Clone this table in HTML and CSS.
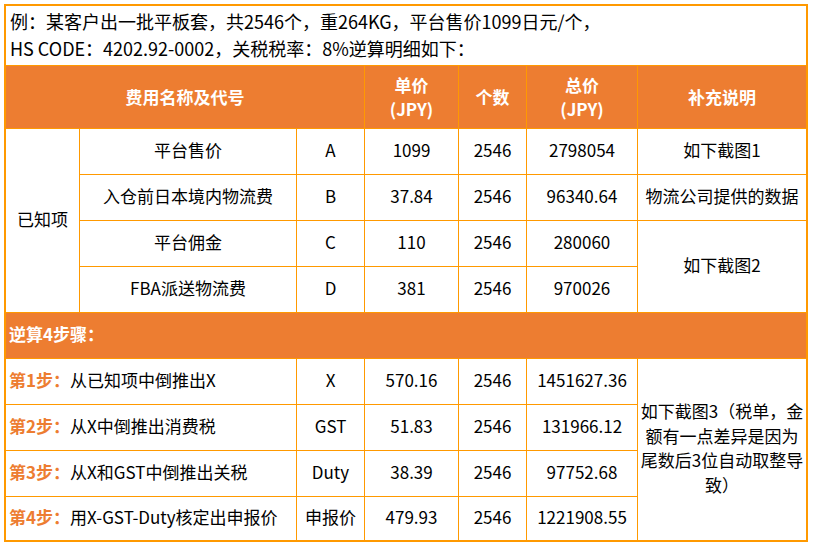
FILE: index.html
```html
<!DOCTYPE html>
<html lang="zh-CN">
<head>
<meta charset="utf-8">
<title>逆算明细</title>
<link rel="stylesheet" href="styles.css">
</head>
<body>
<div class="sheet">
  <div class="cell intro span-all">例：某客户出一批平板套，共2546个，重264KG，平台售价1099日元/个，<br>HS CODE：4202.92-0002，关税税率：8%逆算明细如下：</div>

  <div class="cell head span-name">费用名称及代号</div>
  <div class="cell head">单价<br>(JPY)</div>
  <div class="cell head">个数</div>
  <div class="cell head">总价<br>(JPY)</div>
  <div class="cell head">补充说明</div>

  <div class="cell known">已知项</div>
  <div class="cell">平台售价</div>
  <div class="cell">A</div>
  <div class="cell">1099</div>
  <div class="cell">2546</div>
  <div class="cell">2798054</div>
  <div class="cell">如下截图1</div>

  <div class="cell">入仓前日本境内物流费</div>
  <div class="cell">B</div>
  <div class="cell">37.84</div>
  <div class="cell">2546</div>
  <div class="cell">96340.64</div>
  <div class="cell">物流公司提供的数据</div>

  <div class="cell">平台佣金</div>
  <div class="cell">C</div>
  <div class="cell">110</div>
  <div class="cell">2546</div>
  <div class="cell">280060</div>
  <div class="cell note-two">如下截图2</div>

  <div class="cell">FBA派送物流费</div>
  <div class="cell">D</div>
  <div class="cell">381</div>
  <div class="cell">2546</div>
  <div class="cell">970026</div>

  <div class="cell band span-all">逆算4步骤：</div>

  <div class="cell step"><b class="step-no">第1步：</b>从已知项中倒推出X</div>
  <div class="cell">X</div>
  <div class="cell">570.16</div>
  <div class="cell">2546</div>
  <div class="cell">1451627.36</div>
  <div class="cell note-three">如下截图3（税单，金额有一点差异是因为尾数后3位自动取整导致）</div>

  <div class="cell step"><b class="step-no">第2步：</b>从X中倒推出消费税</div>
  <div class="cell">GST</div>
  <div class="cell">51.83</div>
  <div class="cell">2546</div>
  <div class="cell">131966.12</div>

  <div class="cell step"><b class="step-no">第3步：</b>从X和GST中倒推出关税</div>
  <div class="cell">Duty</div>
  <div class="cell">38.39</div>
  <div class="cell">2546</div>
  <div class="cell">97752.68</div>

  <div class="cell step"><b class="step-no">第4步：</b>用X-GST-Duty核定出申报价</div>
  <div class="cell">申报价</div>
  <div class="cell">479.93</div>
  <div class="cell">2546</div>
  <div class="cell">1221908.55</div>
</div>
</body>
</html>
```

FILE: styles.css
```css
html, body {
  margin: 0;
  padding: 0;
  background: #ffffff;
}

body {
  font-family: "Noto Sans CJK SC", "Noto Sans", "Liberation Sans", sans-serif;
  font-size: 17px;
  color: #000000;
}

.sheet {
  margin: 4px 0 0 4px;
  width: 800px;
  display: grid;
  grid-template-columns: 73px 216px 67px 93px 67px 110px 168px;
  grid-template-rows: 59px 62px 45px 45px 45px 45px 45px 45px 45px 45px 43px;
  gap: 1px;
  background: #ff9900;
  border: 2px solid #ff9900;
}

.cell {
  background: #ffffff;
  display: flex;
  align-items: center;
  justify-content: center;
  text-align: center;
  line-height: 24px;
  white-space: nowrap;
  padding-bottom: 3px;
}

.span-all {
  grid-column: 1 / -1;
}

.intro {
  display: block;
  text-align: left;
  font-size: 18px;
  line-height: 27px;
  padding: 2px 4px;
}

.head {
  background: #ed7d31;
  color: #ffffff;
  font-weight: 700;
  padding-bottom: 1px;
}

.span-name {
  grid-column: span 3;
}

.known {
  grid-row: span 4;
}

.note-two {
  grid-row: span 2;
}

.band {
  background: #ed7d31;
  color: #ffffff;
  font-weight: 700;
  justify-content: flex-start;
  padding-left: 3px;
}

.step {
  grid-column: span 2;
  justify-content: flex-start;
  padding-left: 3px;
}

.step-no {
  color: #ed7d31;
  font-weight: 700;
}

.note-three {
  grid-row: span 4;
  white-space: normal;
  line-height: 24.5px;
  padding: 0 0 3px 0;
}
```
